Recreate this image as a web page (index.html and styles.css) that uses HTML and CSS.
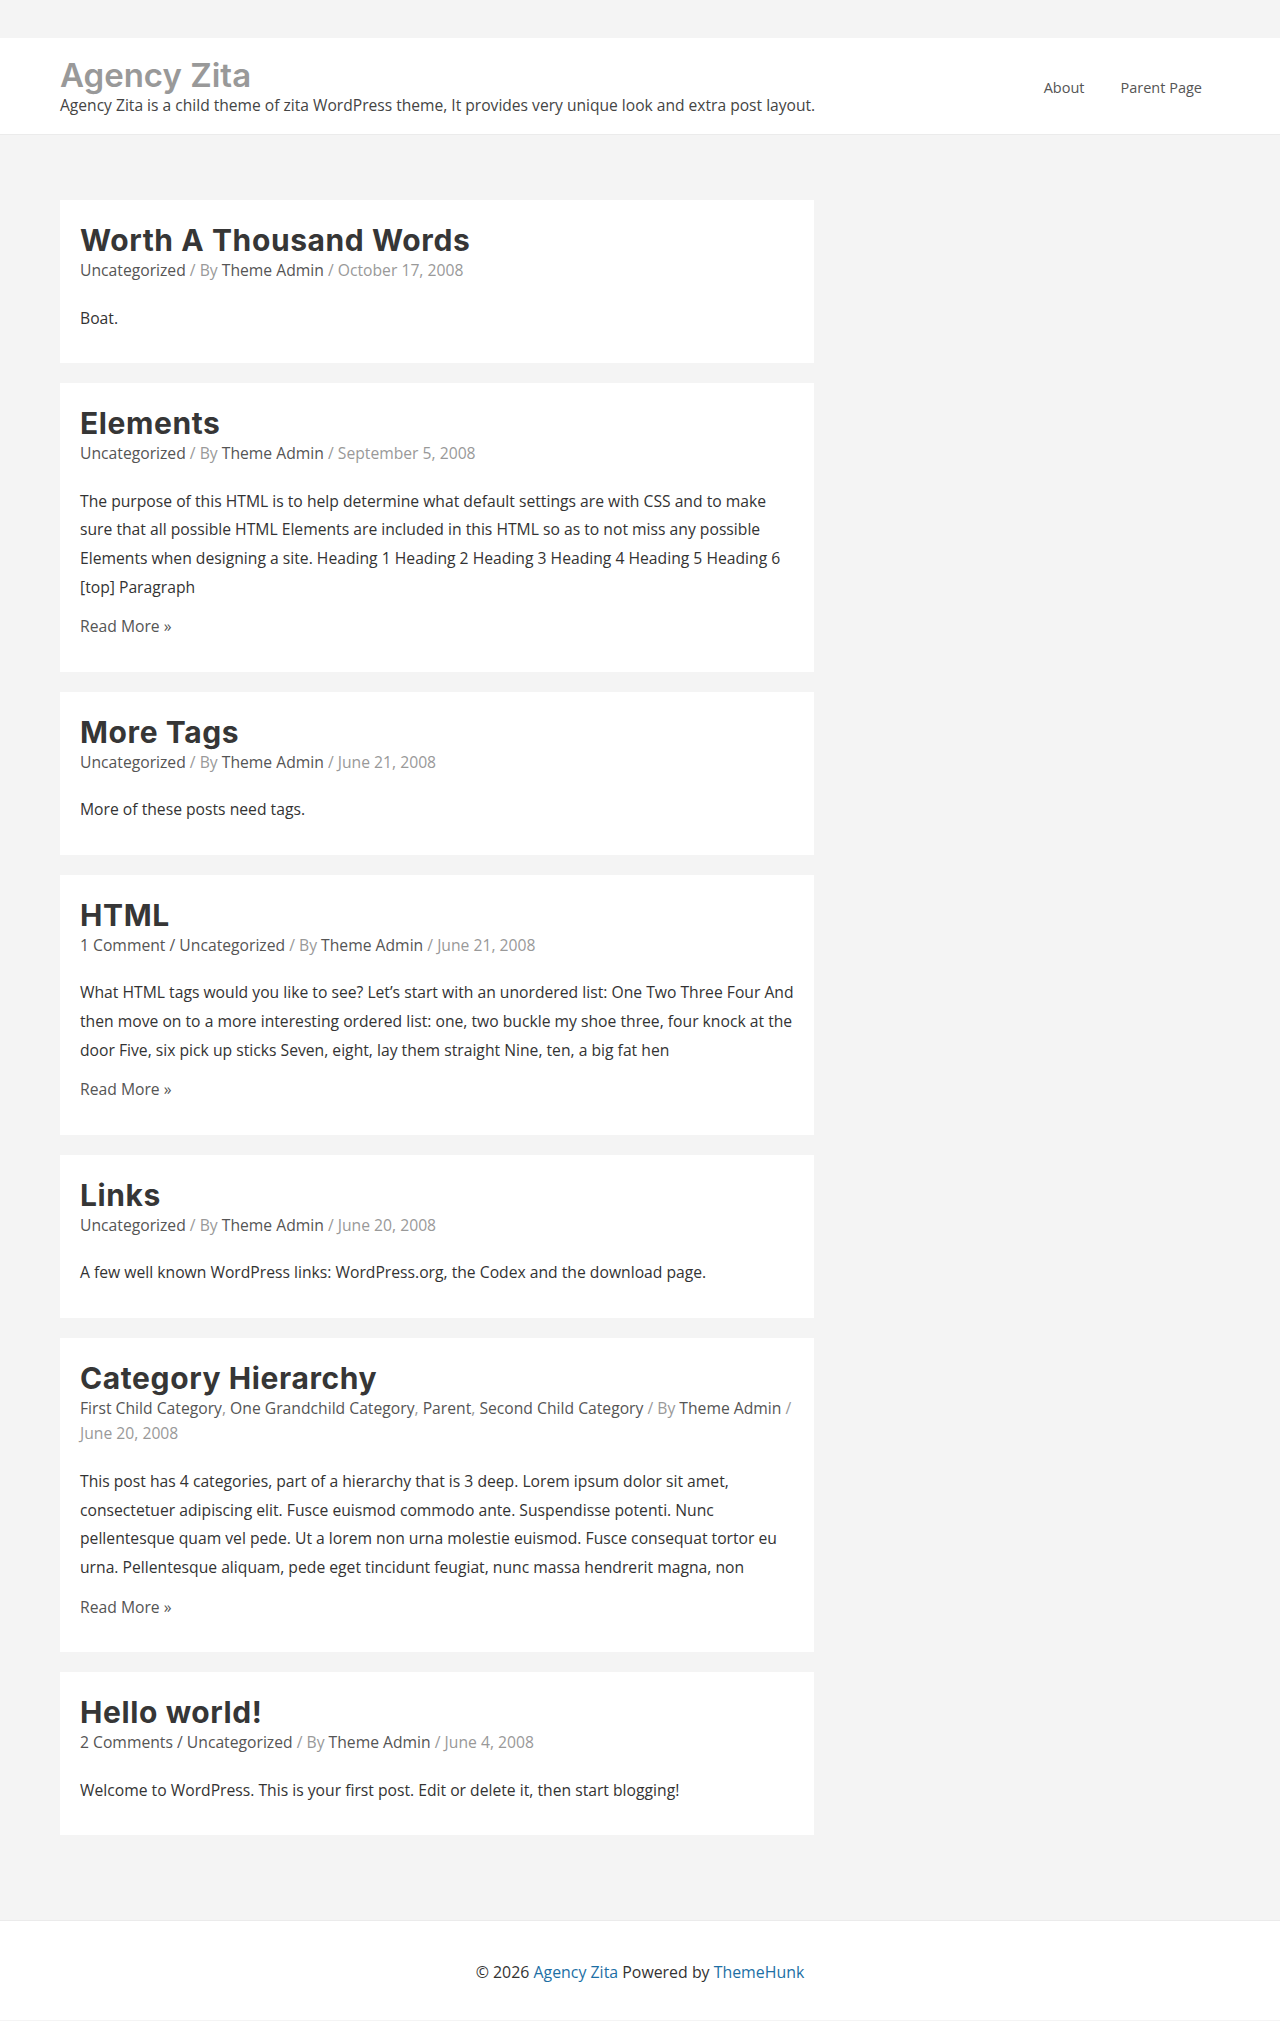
FILE: index.html
```html
<!DOCTYPE html>
<html>
<head>
  <meta charset="utf-8">
  <title>Agency Zita</title>
  <link rel="stylesheet" href="styles.css">
</head>
<body>

  <!-- Header -->
  <header class="site-header">
    <div class="container header-inner">
      <div class="branding">
        <a href="#" class="site-title">Agency Zita</a>
        <p class="site-description">Agency Zita is a child theme of zita WordPress theme, It provides very unique look and extra post layout.</p>
      </div>
      <nav class="main-nav">
        <a href="#">About</a>
        <a href="#">Parent Page</a>
      </nav>
    </div>
  </header>

  <!-- Posts -->
  <div class="site-content">
    <div class="container content-inner">
      <main class="posts">

        <article class="post">
          <h2 class="entry-title"><a href="#">Worth A Thousand Words</a></h2>
          <div class="entry-meta">
            <a href="#">Uncategorized</a> / By <a href="#">Theme Admin</a> / <span class="date">October 17, 2008</span>
          </div>
          <div class="entry-content">
            <p>Boat.</p>
          </div>
        </article>

        <article class="post">
          <h2 class="entry-title"><a href="#">Elements</a></h2>
          <div class="entry-meta">
            <a href="#">Uncategorized</a> / By <a href="#">Theme Admin</a> / <span class="date">September 5, 2008</span>
          </div>
          <div class="entry-content">
            <p>The purpose of this HTML is to help determine what default settings are with CSS and to make sure that all possible HTML Elements are included in this HTML so as to not miss any possible Elements when designing a site. Heading 1 Heading 2 Heading 3 Heading 4 Heading 5 Heading 6 [top] Paragraph</p>
            <p><a href="#" class="read-more">Read More &raquo;</a></p>
          </div>
        </article>

        <article class="post">
          <h2 class="entry-title"><a href="#">More Tags</a></h2>
          <div class="entry-meta">
            <a href="#">Uncategorized</a> / By <a href="#">Theme Admin</a> / <span class="date">June 21, 2008</span>
          </div>
          <div class="entry-content">
            <p>More of these posts need tags.</p>
          </div>
        </article>

        <article class="post">
          <h2 class="entry-title"><a href="#">HTML</a></h2>
          <div class="entry-meta">
            <a href="#">1 Comment</a><span class="dark"> / </span><a href="#">Uncategorized</a> / By <a href="#">Theme Admin</a> / <span class="date">June 21, 2008</span>
          </div>
          <div class="entry-content">
            <p>What HTML tags would you like to see? Let’s start with an unordered list: One Two Three Four And then move on to a more interesting ordered list: one, two buckle my shoe three, four knock at the door Five, six pick up sticks Seven, eight, lay them straight Nine, ten, a big fat hen</p>
            <p><a href="#" class="read-more">Read More &raquo;</a></p>
          </div>
        </article>

        <article class="post">
          <h2 class="entry-title"><a href="#">Links</a></h2>
          <div class="entry-meta">
            <a href="#">Uncategorized</a> / By <a href="#">Theme Admin</a> / <span class="date">June 20, 2008</span>
          </div>
          <div class="entry-content">
            <p>A few well known WordPress links: WordPress.org, the Codex and the download page.</p>
          </div>
        </article>

        <article class="post">
          <h2 class="entry-title"><a href="#">Category Hierarchy</a></h2>
          <div class="entry-meta">
            <a href="#">First Child Category</a>, <a href="#">One Grandchild Category</a>, <a href="#">Parent</a>, <a href="#">Second Child Category</a> / By <a href="#">Theme Admin</a> / <span class="date">June 20, 2008</span>
          </div>
          <div class="entry-content">
            <p>This post has 4 categories, part of a hierarchy that is 3 deep. Lorem ipsum dolor sit amet, consectetuer adipiscing elit. Fusce euismod commodo ante. Suspendisse potenti. Nunc pellentesque quam vel pede. Ut a lorem non urna molestie euismod. Fusce consequat tortor eu urna. Pellentesque aliquam, pede eget tincidunt feugiat, nunc massa hendrerit magna, non</p>
            <p><a href="#" class="read-more">Read More &raquo;</a></p>
          </div>
        </article>

        <article class="post">
          <h2 class="entry-title"><a href="#">Hello world!</a></h2>
          <div class="entry-meta">
            <a href="#">2 Comments</a><span class="dark"> / </span><a href="#">Uncategorized</a> / By <a href="#">Theme Admin</a> / <span class="date">June 4, 2008</span>
          </div>
          <div class="entry-content">
            <p>Welcome to WordPress. This is your first post. Edit or delete it, then start blogging!</p>
          </div>
        </article>

      </main>
      <aside class="sidebar"></aside>
    </div>
  </div>

  <!-- Footer -->
  <footer class="site-footer">
    <p>&copy; 2026 <a href="#">Agency Zita</a> Powered by <a href="#">ThemeHunk</a></p>
  </footer>

</body>
</html>
```

FILE: styles.css
```css
body {
  margin: 0;
  padding: 0;
  font-family: "Open Sans", Lato, sans-serif;
  font-size: 15.7px;
  color: #333;
  background-color: #f4f4f4;
}

a {
  text-decoration: none;
}

.container {
  max-width: 1160px;
  margin: 0 auto;
}

/* Header */
.site-header {
  margin-top: 38px;
  background-color: #fff;
  border-bottom: 1px solid #ebebeb;
}

.header-inner {
  display: flex;
  justify-content: space-between;
  align-items: center;
  padding: 18px 0 18px;
}

.site-title {
  display: block;
  font-family: Inter, "Open Sans", sans-serif;
  font-size: 33px;
  font-weight: 600;
  line-height: 38px;
  color: #999;
}

.site-description {
  margin: 0;
  font-size: 15.6px;
  line-height: 22px;
  color: #444;
}

.main-nav {
  display: flex;
  margin-top: 2px;
}

.main-nav a {
  padding: 0 18px;
  font-size: 14.5px;
  color: #555;
}

/* Content */
.site-content {
  padding: 65px 0 65px;
}

.content-inner {
  display: flex;
}

.posts {
  width: 65%;
}

.sidebar {
  width: 35%;
}

.post {
  background-color: #fff;
  padding: 22px 20px 20px;
  margin-bottom: 20px;
}

.entry-title {
  margin: 0;
  font-family: Inter, "Open Sans", sans-serif;
  font-size: 30px;
  font-weight: 700;
  line-height: 36px;
  letter-spacing: 0.6px;
}

.entry-title a {
  color: #363636;
}

.entry-meta {
  line-height: 25.6px;
  color: #999;
}

.entry-meta a,
.entry-meta .dark {
  color: #555;
}

.entry-meta .date {
  color: #999;
}

.entry-content {
  margin-top: 20px;
}

.entry-content p {
  margin: 0 0 10.6px;
  line-height: 28.8px;
}

.read-more {
  color: #555;
}

/* Footer */
.site-footer {
  background-color: #fff;
  border-top: 1px solid #ebebeb;
  height: 99px;
  display: flex;
  align-items: center;
  justify-content: center;
}

.site-footer p {
  margin: 0;
  padding-top: 2px;
  font-size: 15.9px;
  color: #333;
}

.site-footer a {
  color: #1d6fa5;
}
```
